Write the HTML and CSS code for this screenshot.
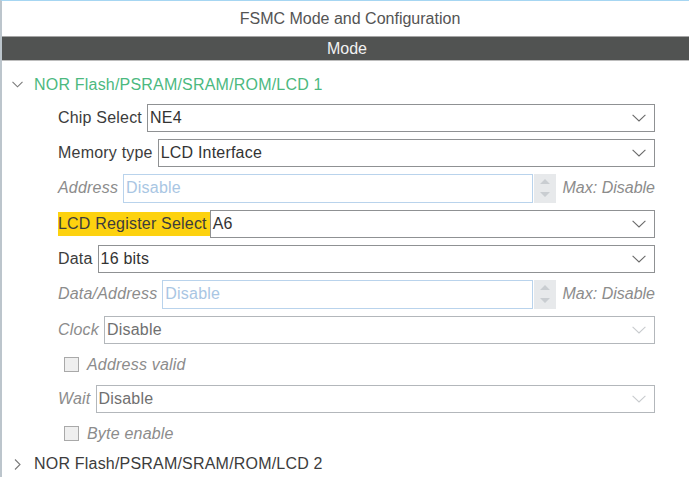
FILE: index.html
```html
<!DOCTYPE html>
<html>
<head>
<meta charset="utf-8">
<link rel="stylesheet" href="styles.css">
</head>
<body>
<div class="panel">
  <div class="title">FSMC Mode and Configuration</div>
  <div class="bar">Mode</div>
  <div class="tree">
    <div class="node open">
      <svg class="twisty" width="11" height="7" viewBox="0 0 11 7"><path d="M0.5 0.8 L5.5 5.8 L10.5 0.8" fill="none" stroke="#7a7a7a" stroke-width="1.1"/></svg>
      <span>NOR Flash/PSRAM/SRAM/ROM/LCD 1</span>
    </div>
    <div class="fields">
      <div class="row">
        <span class="label">Chip Select</span>
        <div class="select"><span>NE4</span><svg class="chev" width="14" height="8" viewBox="0 0 14 8"><path d="M0.6 0.8 L7 7 L13.4 0.8" fill="none" stroke="#6a6a6a" stroke-width="1.1"/></svg></div>
      </div>
      <div class="row">
        <span class="label">Memory type</span>
        <div class="select"><span>LCD Interface</span><svg class="chev" width="14" height="8" viewBox="0 0 14 8"><path d="M0.6 0.8 L7 7 L13.4 0.8" fill="none" stroke="#6a6a6a" stroke-width="1.1"/></svg></div>
      </div>
      <div class="row">
        <span class="label dis">Address</span>
        <div class="input"><span>Disable</span></div>
        <div class="spin"><svg width="12" height="22" viewBox="0 0 12 22"><path d="M1 7 L6 2 L11 7 Z M1 15 L6 20 L11 15 Z" fill="#c9cdd1"/></svg></div>
        <span class="max">Max: Disable</span>
      </div>
      <div class="row gap1">
        <span class="label hl">LCD Register Select</span>
        <div class="select"><span>A6</span><svg class="chev" width="14" height="8" viewBox="0 0 14 8"><path d="M0.6 0.8 L7 7 L13.4 0.8" fill="none" stroke="#6a6a6a" stroke-width="1.1"/></svg></div>
      </div>
      <div class="row">
        <span class="label">Data</span>
        <div class="select"><span>16 bits</span><svg class="chev" width="14" height="8" viewBox="0 0 14 8"><path d="M0.6 0.8 L7 7 L13.4 0.8" fill="none" stroke="#6a6a6a" stroke-width="1.1"/></svg></div>
      </div>
      <div class="row">
        <span class="label dis">Data/Address</span>
        <div class="input"><span>Disable</span></div>
        <div class="spin"><svg width="12" height="22" viewBox="0 0 12 22"><path d="M1 7 L6 2 L11 7 Z M1 15 L6 20 L11 15 Z" fill="#c9cdd1"/></svg></div>
        <span class="max">Max: Disable</span>
      </div>
      <div class="row gap1">
        <span class="label dis">Clock</span>
        <div class="select off"><span>Disable</span><svg class="chev" width="14" height="8" viewBox="0 0 14 8"><path d="M0.6 0.8 L7 7 L13.4 0.8" fill="none" stroke="#c8cbce" stroke-width="1.1"/></svg></div>
      </div>
      <div class="row check">
        <span class="box"></span>
        <span class="label dis">Address valid</span>
      </div>
      <div class="row">
        <span class="label dis">Wait</span>
        <div class="select off"><span>Disable</span><svg class="chev" width="14" height="8" viewBox="0 0 14 8"><path d="M0.6 0.8 L7 7 L13.4 0.8" fill="none" stroke="#c8cbce" stroke-width="1.1"/></svg></div>
      </div>
      <div class="row check">
        <span class="box"></span>
        <span class="label dis">Byte enable</span>
      </div>
    </div>
    <div class="node">
      <svg class="twisty" width="11" height="11" viewBox="0 0 11 11"><path d="M3 0.5 L8 5.5 L3 10.5" fill="none" stroke="#7a7a7a" stroke-width="1.1"/></svg>
      <span>NOR Flash/PSRAM/SRAM/ROM/LCD 2</span>
    </div>
  </div>
</div>
</body>
</html>
```
FILE: styles.css
```css
html, body {
  margin: 0;
  padding: 0;
  background: #ffffff;
}
body {
  font-family: "Liberation Sans", Arial, sans-serif;
  font-size: 16px;
  color: #3c3c3c;
  width: 689px;
  height: 478px;
  overflow: hidden;
}
.panel {
  border-top: 1px solid #a6d6f2;
  border-left: 2px solid #bcc5cc;
  height: 477px;
  box-sizing: border-box;
}
.title {
  height: 35px;
  line-height: 35px;
  text-align: center;
  color: #545454;
  padding-left: 9px;
}
.bar {
  border-top: 1px solid #a5a5a5;
  border-bottom: 1px solid #bdbdbd;
  background: #515352;
  color: #f2f2f2;
  height: 23px;
  line-height: 23px;
  text-align: center;
  padding-left: 3px;
}
.tree {
  padding-top: 14px;
  letter-spacing: 0.2px;
}
.node {
  display: flex;
  align-items: center;
  height: 20px;
  padding-left: 10px;
  color: #3c3c3c;
}
.node.open {
  color: #4cb97f;
}
.twisty {
  margin-right: 11px;
  flex: none;
}
.node.open .twisty {
  margin-top: -1px;
}
.fields {
  display: flex;
  flex-direction: column;
  gap: 7px;
  padding: 9px 34px 7px 56px;
}
.row {
  display: flex;
  align-items: center;
  height: 28px;
}
.row.gap1 {
  margin-top: 1px;
}
.row.check {
  height: 27px;
  padding-left: 6px;
}
.label {
  padding-right: 5px;
  white-space: nowrap;
  flex: none;
}
.label.dis {
  color: #8c8c8c;
  font-style: italic;
}
.label.hl {
  background: #fdd20f;
  line-height: 24px;
  padding-right: 3px;
  color: #3c3c3c;
}
.select {
  flex: 1;
  height: 28px;
  box-sizing: border-box;
  border: 1px solid #8f9193;
  display: flex;
  align-items: center;
  justify-content: space-between;
  padding: 0 8px 0 2px;
  color: #333333;
}
.select.off {
  border-color: #b3b7bb;
  color: #707070;
}
.input {
  flex: 1;
  height: 29px;
  box-sizing: border-box;
  border: 1px solid #b9d3ec;
  display: flex;
  align-items: center;
  padding-left: 2px;
  color: #a9c6e3;
}
.spin {
  flex: none;
  width: 22px;
  height: 29px;
  background: #e7e9eb;
  display: flex;
  align-items: center;
  justify-content: center;
  margin-left: 1px;
}
.max {
  flex: none;
  margin-left: 7px;
  font-style: italic;
  color: #8c8c8c;
  letter-spacing: 0;
}
.box {
  flex: none;
  width: 13px;
  height: 13px;
  border: 1px solid #a9a9a9;
  background: #efefef;
  margin-right: 8px;
}
```
